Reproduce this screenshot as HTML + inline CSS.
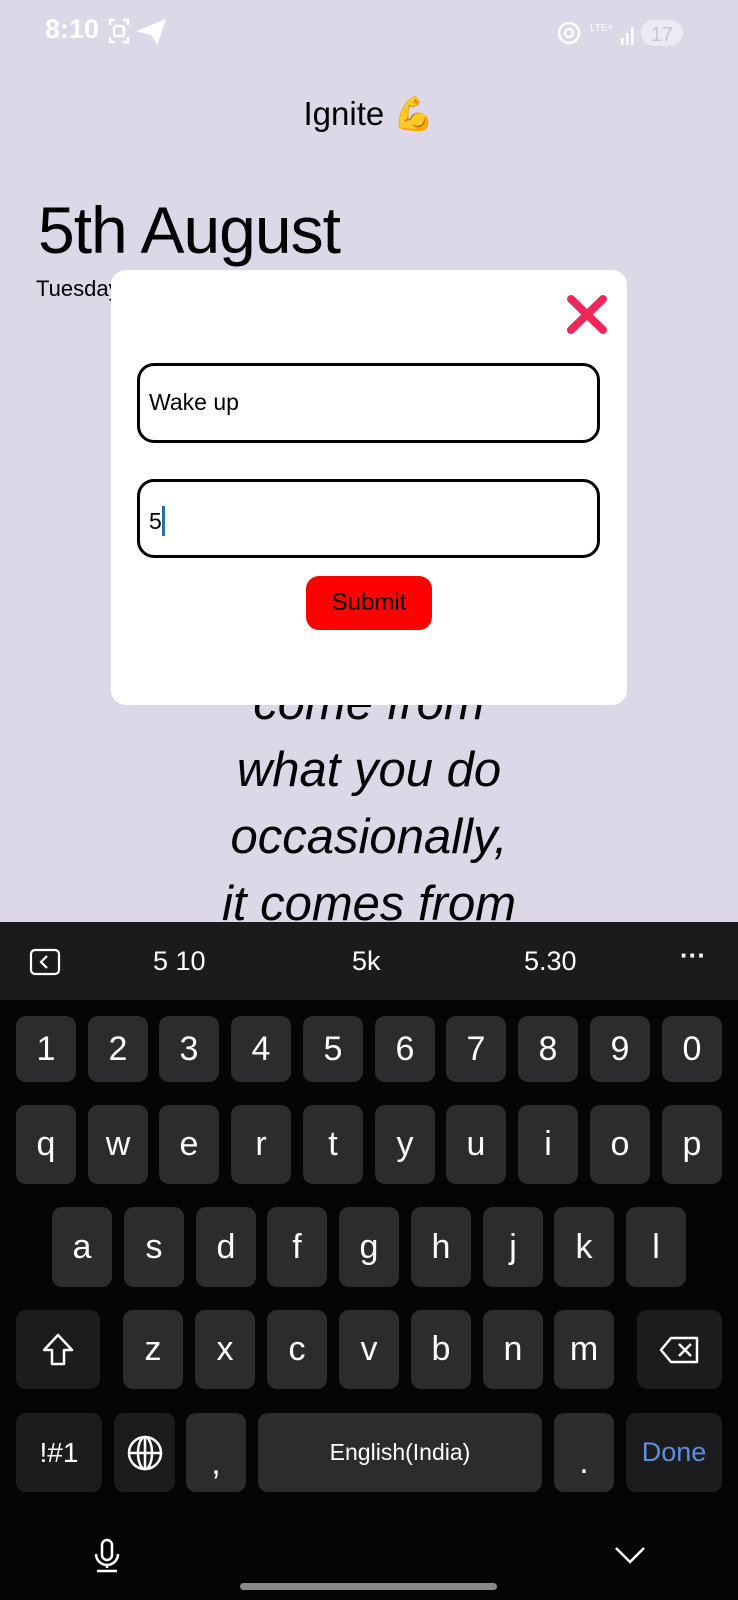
<!DOCTYPE html>
<html><head><meta charset="utf-8"><style>
*{margin:0;padding:0;box-sizing:border-box}
body{width:738px;height:1600px;overflow:hidden;background:#dcd8e8;font-family:"Liberation Sans",sans-serif;position:relative}
.a{position:absolute}
.key{position:absolute;background:#2c2c2e;border-radius:10px;color:#fff;display:flex;align-items:center;justify-content:center;font-size:34px}
.sp{background:#1c1c1e}
.q{font-style:italic;font-size:49px;color:#000;width:738px;text-align:center;left:0}
</style></head><body>
<div class="a" style="left:45px;top:14px;color:#fff;font-size:27px;font-weight:bold">8:10</div>
<svg class="a" style="left:108px;top:17px" width="60" height="28" viewBox="0 0 60 28" fill="none" stroke="#fff" stroke-width="2.5"><path d="M2 8V3h5M15 3h5v5M20 20v5h-5M7 25H2v-5"/><rect x="6" y="9" width="10" height="10" rx="2"/><path d="M32 14L56 4L49 25L44 17Z" fill="#fff"/></svg>
<svg class="a" style="left:555px;top:18px" width="140" height="30" viewBox="0 0 140 30"><circle cx="14" cy="15" r="10" fill="none" stroke="#fff" stroke-width="2.5"/><circle cx="14" cy="15" r="4" fill="none" stroke="#fff" stroke-width="2.5"/><text x="35" y="13" fill="#fff" font-size="10" font-family="Liberation Sans">LTE+</text><rect x="66" y="20" width="2.5" height="7" fill="#fff"/><rect x="71" y="15" width="2.5" height="12" fill="#fff"/><rect x="76" y="9" width="2.5" height="18" fill="#fff"/><rect x="86" y="2" width="42" height="26" rx="13" fill="#eeeaf4"/><text x="107" y="23" text-anchor="middle" fill="#c8c4d0" font-size="20" font-family="Liberation Sans">17</text></svg>
<div class="a" style="left:0;width:738px;text-align:center;top:95px;font-size:33px">Ignite 💪</div>
<div class="a" style="left:38px;top:192px;font-size:66px;letter-spacing:-1px">5th August</div>
<div class="a" style="left:36px;top:276px;font-size:22px">Tuesday</div>
<div class="a q" style="top:670px;line-height:67px">come from<br>what you do<br>occasionally,<br>it comes from</div>
<div class="a" style="left:111px;top:270px;width:516px;height:435px;background:#fff;border-radius:15px"></div>
<svg class="a" style="left:566px;top:294px" width="42" height="41" viewBox="0 0 42 41"><path d="M5 5L37 36M37 5L5 36" stroke="#f0285a" stroke-width="8" stroke-linecap="round"/></svg>
<div class="a" style="left:137px;top:363px;width:463px;height:80px;border:3px solid #000;border-radius:17px;font-size:23px;padding:23px 0 0 9px">Wake up</div>
<div class="a" style="left:137px;top:479px;width:463px;height:79px;border:3px solid #000;border-radius:17px;font-size:23px;padding:24px 0 0 9px">5<span style="display:inline-block;width:3px;height:30px;background:#2a6fae;vertical-align:-7px"></span></div>
<div class="a" style="left:306px;top:576px;width:126px;height:54px;background:#f00;border-radius:13px;font-size:24px;text-align:center;line-height:54px">Submit</div>
<div class="a" style="left:0;top:922px;width:738px;height:678px;background:#050505"></div>
<div class="a" style="left:0;top:922px;width:738px;height:78px;background:#1b1b1d"></div>
<svg class="a" style="left:29px;top:948px" width="32" height="28" viewBox="0 0 32 28" fill="none" stroke="#fff" stroke-width="2.2"><rect x="2" y="2" width="28" height="24" rx="4"/><path d="M18 8l-6 6 6 6"/></svg>
<div class="a" style="left:153px;top:946px;color:#fff;font-size:27px">5 10</div>
<div class="a" style="left:352px;top:946px;color:#fff;font-size:27px">5k</div>
<div class="a" style="left:524px;top:946px;color:#fff;font-size:27px">5.30</div>
<div class="a" style="left:680px;top:940px;color:#fff;font-size:26px;font-weight:bold">···</div>
<div class="key" style="left:16px;top:1016px;width:60px;height:66px">1</div>
<div class="key" style="left:88px;top:1016px;width:60px;height:66px">2</div>
<div class="key" style="left:159px;top:1016px;width:60px;height:66px">3</div>
<div class="key" style="left:231px;top:1016px;width:60px;height:66px">4</div>
<div class="key" style="left:303px;top:1016px;width:60px;height:66px">5</div>
<div class="key" style="left:375px;top:1016px;width:60px;height:66px">6</div>
<div class="key" style="left:446px;top:1016px;width:60px;height:66px">7</div>
<div class="key" style="left:518px;top:1016px;width:60px;height:66px">8</div>
<div class="key" style="left:590px;top:1016px;width:60px;height:66px">9</div>
<div class="key" style="left:662px;top:1016px;width:60px;height:66px">0</div>
<div class="key" style="left:16px;top:1105px;width:60px;height:79px">q</div>
<div class="key" style="left:88px;top:1105px;width:60px;height:79px">w</div>
<div class="key" style="left:159px;top:1105px;width:60px;height:79px">e</div>
<div class="key" style="left:231px;top:1105px;width:60px;height:79px">r</div>
<div class="key" style="left:303px;top:1105px;width:60px;height:79px">t</div>
<div class="key" style="left:375px;top:1105px;width:60px;height:79px">y</div>
<div class="key" style="left:446px;top:1105px;width:60px;height:79px">u</div>
<div class="key" style="left:518px;top:1105px;width:60px;height:79px">i</div>
<div class="key" style="left:590px;top:1105px;width:60px;height:79px">o</div>
<div class="key" style="left:662px;top:1105px;width:60px;height:79px">p</div>
<div class="key" style="left:52px;top:1207px;width:60px;height:80px">a</div>
<div class="key" style="left:124px;top:1207px;width:60px;height:80px">s</div>
<div class="key" style="left:196px;top:1207px;width:60px;height:80px">d</div>
<div class="key" style="left:267px;top:1207px;width:60px;height:80px">f</div>
<div class="key" style="left:339px;top:1207px;width:60px;height:80px">g</div>
<div class="key" style="left:411px;top:1207px;width:60px;height:80px">h</div>
<div class="key" style="left:483px;top:1207px;width:60px;height:80px">j</div>
<div class="key" style="left:554px;top:1207px;width:60px;height:80px">k</div>
<div class="key" style="left:626px;top:1207px;width:60px;height:80px">l</div>
<div class="key sp" style="left:16px;top:1310px;width:84px;height:79px"><svg width="34" height="36" viewBox="0 0 34 36" fill="none" stroke="#fff" stroke-width="2.5" stroke-linejoin="round"><path d="M17 3L3 18h8v14h12V18h8Z"/></svg></div>
<div class="key" style="left:123px;top:1310px;width:60px;height:79px">z</div>
<div class="key" style="left:195px;top:1310px;width:60px;height:79px">x</div>
<div class="key" style="left:267px;top:1310px;width:60px;height:79px">c</div>
<div class="key" style="left:339px;top:1310px;width:60px;height:79px">v</div>
<div class="key" style="left:411px;top:1310px;width:60px;height:79px">b</div>
<div class="key" style="left:483px;top:1310px;width:60px;height:79px">n</div>
<div class="key" style="left:554px;top:1310px;width:60px;height:79px">m</div>
<div class="key sp" style="left:637px;top:1310px;width:85px;height:79px"><svg width="42" height="30" viewBox="0 0 42 30" fill="none" stroke="#fff" stroke-width="2.5" stroke-linejoin="round"><path d="M12 3h26v24H12L2 15Z"/><path d="M20 9l12 12M32 9L20 21"/></svg></div>
<div class="key sp" style="left:16px;top:1413px;width:86px;height:79px;font-size:28px">!#1</div>
<div class="key sp" style="left:114px;top:1413px;width:61px;height:79px"><svg width="38" height="38" viewBox="0 0 38 38" fill="none" stroke="#fff" stroke-width="2.5"><circle cx="19" cy="19" r="16"/><ellipse cx="19" cy="19" rx="7" ry="16"/><path d="M3 19h32M19 3v32"/></svg></div>
<div class="key" style="left:186px;top:1413px;width:60px;height:79px;font-size:34px;padding-top:22px">,</div>
<div class="key" style="left:258px;top:1413px;width:284px;height:79px;font-size:23px">English(India)</div>
<div class="key" style="left:554px;top:1413px;width:60px;height:79px;padding-top:20px">.</div>
<div class="key sp" style="left:626px;top:1413px;width:96px;height:79px;color:#5d8fe0;font-size:27px">Done</div>
<svg class="a" style="left:92px;top:1538px" width="30" height="36" viewBox="0 0 30 36" fill="none" stroke="#fff" stroke-width="2.5"><rect x="10" y="2" width="10" height="20" rx="5"/><path d="M4 16a11 11 0 0 0 22 0M15 27v3M5 33h20"/></svg>
<svg class="a" style="left:614px;top:1545px" width="32" height="20" viewBox="0 0 32 20" fill="none" stroke="#fff" stroke-width="2.5"><path d="M2 3l14 14L30 3"/></svg>
<div class="a" style="left:240px;top:1583px;width:257px;height:7px;border-radius:4px;background:#8a8a8a"></div>
</body></html>
